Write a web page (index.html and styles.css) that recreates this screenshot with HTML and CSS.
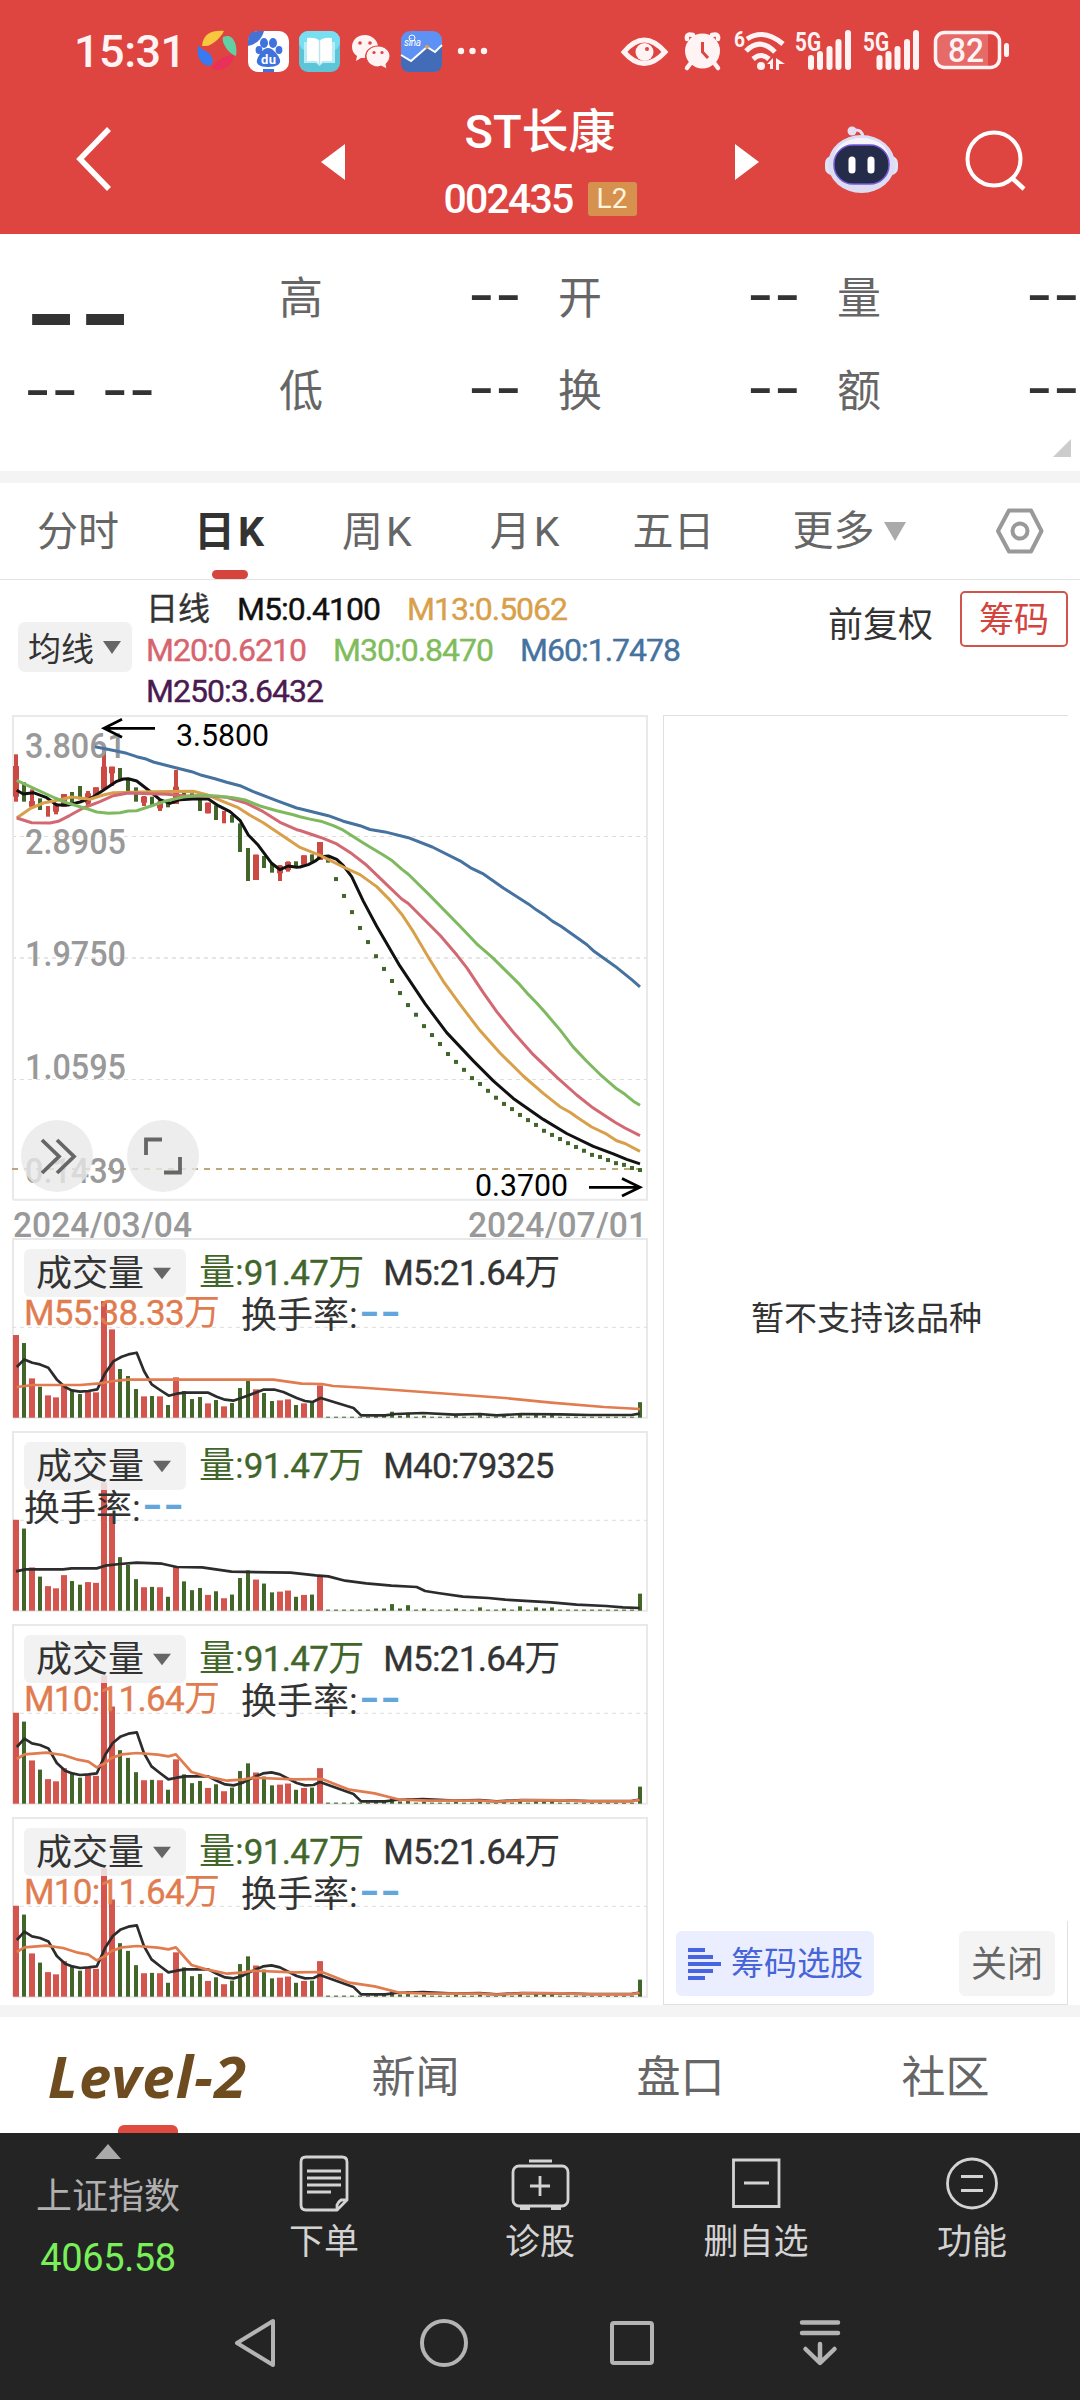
FILE: index.html
```html
<!DOCTYPE html>
<html lang="zh-CN">
<head>
<meta charset="utf-8">
<title>ST长康 002435</title>
<link rel="stylesheet" href="styles.css">
</head>
<body>
<header class="top">
  <div class="status">
    <span class="clock">15:31</span>
    <svg class="apps" width="300" height="44" viewBox="0 0 300 44">
      <g>
        <path d="M4 17C5 4 15 1 26 2C22 10 13 17 8 17Z" fill="#f8c63f"/>
        <path d="M25 8C35 3 40 16 38 27C31 25 23 14 25 8Z" fill="#62cfa5"/>
        <path d="M0 16C-2 28 3 36 11 37C17 35 15 28 11 24C7 21 2 20 0 16Z" fill="#3a7af0"/>
        <path d="M13 39C20 43 32 41 36 27C29 25 19 31 13 39Z" fill="#e8305a"/>
      </g>
      <g transform="translate(50 2)">
        <rect width="41" height="41" rx="10" fill="#fff"/>
        <path d="M0 15V10Q0 0 10 0H16Q13 12 0 15Z" fill="#4671d5"/>
        <g fill="#3f72dc"><ellipse cx="16" cy="12" rx="4" ry="5"/><ellipse cx="25" cy="12" rx="4" ry="5"/><ellipse cx="11" cy="19" rx="3.4" ry="4"/><ellipse cx="31" cy="19" rx="3.4" ry="4"/>
        <path d="M20 17C25 17 31 25 32 29S29 36 20 36S8 33 9 29S15 17 20 17Z"/><path d="M15 38H26V41H15Z"/></g>
        <text x="13" y="33" font-size="13" font-weight="700" fill="#fff" textLength="15">du</text>
      </g>
      <g transform="translate(101 2)">
        <rect width="41" height="41" rx="9" fill="#5ec5d8"/><rect width="41" height="20" rx="9" fill="#78dff2"/>
        <path d="M5 11H36V32H24L20.500 35L17 32H5Z" fill="#b8ecf6"/>
        <path d="M8 7Q17 6 20.500 10Q24 6 33 7V30H23L20.500 34L18 30H8Z" fill="#fff"/><path d="M20.500 10V34" stroke="#bfe3ec" stroke-width="1.500"/>
      </g>
      <g transform="translate(153 5)" fill="#fff3f4">
        <path d="M14 1C6 1 1 6.500 1 13C1 17 3 20 6 22L5 27L10 24H14C14 15 20 12 27 12C26 5 20 1 14 1Z"/>
        <path d="M27 12C20 12 15 17 15 22S20 33 27 33L30 32L36 35L35 30C37 28 39 25 39 22C39 17 34 12 27 12Z" stroke="#de4440" stroke-width="1"/>
        <g fill="#de4440"><circle cx="9" cy="9" r="1.800"/><circle cx="19" cy="9" r="1.800"/><circle cx="23" cy="18.500" r="1.600"/><circle cx="31" cy="18.500" r="1.600"/></g>
      </g>
      <g transform="translate(203 2)">
        <rect width="41" height="41" rx="9" fill="#5d91f4"/>
        <path d="M0 24L10 30L26 16L34 21L41 14V32Q41 41 32 41H9Q0 41 0 32Z" fill="#426bb8"/>
        <path d="M0 24L10 30L26 16L34 21L41 14" fill="none" stroke="#fff" stroke-width="2"/>
        <circle cx="26" cy="16" r="2" fill="#e8a04a"/><circle cx="11" cy="7" r="3" fill="none" stroke="#fff"/>
        <text x="3" y="15" font-size="10" font-style="italic" fill="#fff" textLength="17">sina</text>
      </g>
      <g fill="#fff3f4"><circle cx="263" cy="22" r="3.200"/><circle cx="274.500" cy="22" r="3.200"/><circle cx="286" cy="22" r="3.200"/></g>
    </svg>
    <svg class="sys" width="392" height="60" viewBox="0 -8 392 60" fill="#fff3f4">
      <path d="M4 23Q24 -1 45 23Q24 46 4 23Z" fill="none" stroke="#fff3f4" stroke-width="5"/><circle cx="24.500" cy="23" r="9"/><circle cx="27" cy="20" r="2" fill="#de4440"/>
      <circle cx="82.500" cy="22" r="17.500"/><path d="M67 10Q66 4 73 6M98 10Q99 4 92 6M70 35L67 39M95 35L98 39" stroke="#fff3f4" stroke-width="4.500" fill="none" stroke-linecap="round"/><path d="M82.500 13V23L88 29" stroke="#de4440" stroke-width="3" fill="none"/>
      <text x="114" y="18" font-size="22" font-weight="700" textLength="11" lengthAdjust="spacingAndGlyphs">6</text>
      <g fill="none" stroke="#fff3f4" stroke-width="5"><path d="M127 10Q144 -1 163 15M126 22Q140 8 155 23M133 30Q141 23 149 30"/></g>
      <circle cx="141" cy="37" r="4"/><path d="M147 35L153 29V40H150V35ZM156 29V41H159V35H165Z"/>
      <text x="175" y="22" font-size="26" font-weight="700" textLength="26" lengthAdjust="spacingAndGlyphs">5G</text>
      <path d="M191 29V38M200 25V38M209.500 20V38M218.500 13V38M228 4V38" stroke="#fff3f4" stroke-width="6" stroke-linecap="round"/>
      <text x="243" y="22" font-size="26" font-weight="700" textLength="26" lengthAdjust="spacingAndGlyphs">5G</text>
      <path d="M259.500 29V38M268.500 25V38M277.500 20V38M287 13V38M296 4V38" stroke="#fff3f4" stroke-width="6" stroke-linecap="round"/>
      <g transform="translate(-2 0)"><path d="M324 5H370V39H324Q318 39 318 32V12Q318 5 324 5Z" opacity=".22"/>
      <rect x="317.500" y="3.500" width="64" height="35" rx="9" fill="none" stroke="#fff3f4" stroke-width="3.500"/><rect x="386" y="14" width="5" height="14" rx="2.500"/>
      <text x="330" y="33" font-size="34" font-weight="500" textLength="36" lengthAdjust="spacingAndGlyphs">82</text></g>
    </svg>
  </div>
  <div class="titlebar">
    <svg class="back" width="36" height="66" viewBox="0 0 36 66"><path d="M33 3L4 33L33 63" fill="none" stroke="#fff" stroke-width="5.500"/></svg>
    <svg class="prev" width="24" height="36" viewBox="0 0 24 36"><path d="M24 0V36L0 18Z" fill="#fff"/></svg>
    <div class="names">
      <div class="name">ST长康</div>
      <div class="code"><span>002435</span><b>L2</b></div>
    </div>
    <svg class="next" width="24" height="36" viewBox="0 0 24 36"><path d="M0 0V36L24 18Z" fill="#fff"/></svg>
    <svg class="robot" width="74" height="70" viewBox="0 0 74 70">
      <circle cx="27" cy="6" r="4.500" fill="#e6e0f4"/><path d="M29 5Q37 4 38 12" fill="none" stroke="#e6e0f4" stroke-width="3"/>
      <rect x="0" y="31" width="73" height="19" rx="7" fill="#dfe2f8"/>
      <ellipse cx="36.500" cy="39" rx="33.500" ry="29" fill="#dcdcf3"/><ellipse cx="36.500" cy="32" rx="27" ry="19" fill="#f6f4fb"/>
      <rect x="9" y="20" width="55" height="39" rx="19" fill="#252c4a" stroke="#7358d8" stroke-width="1.500"/>
      <path d="M27 35V45M46 35V45" stroke="#fff" stroke-width="7" stroke-linecap="round"/>
    </svg>
    <svg class="search" width="64" height="64" viewBox="0 0 64 64"><circle cx="30" cy="30" r="26.500" fill="none" stroke="#fff" stroke-width="4"/><path d="M48 49L60 60" stroke="#fff" stroke-width="4.500"/></svg>
  </div>
</header>

<section class="quote">
  <div class="price"><span class="big">--</span><span class="chg"><i>--</i><i>--</i></span></div>
  <div class="cell"><span>高</span><i>--</i></div><div class="cell"><span>开</span><i>--</i></div><div class="cell"><span>量</span><i>--</i></div>
  <div class="cell"><span>低</span><i>--</i></div><div class="cell"><span>换</span><i>--</i></div><div class="cell"><span>额</span><i>--</i></div>
  <svg class="corner" width="18" height="18" viewBox="0 0 18 18"><path d="M18 0V18H0Z" fill="#ccc"/></svg>
</section>

<nav class="periods">
  <span>分时</span><span class="on k">日K</span><span class="k">周K</span><span class="k">月K</span><span>五日</span>
  <span class="more">更多<svg width="24" height="19" viewBox="0 0 24 19"><path d="M1 0H23L12 19Z" fill="#aaa"/></svg></span>
  <svg class="gear" width="50" height="46" viewBox="0 0 50 46"><path d="M14 2.500H36L46.500 23L36 43.500H14L3 23Z" fill="none" stroke="#999" stroke-width="4" stroke-linejoin="round"/><circle cx="25" cy="23" r="7.500" fill="none" stroke="#999" stroke-width="4"/></svg>
</nav>

<section class="legend">
  <div class="pick">均线<svg width="20" height="13" viewBox="0 0 20 13"><path d="M1 0H19L10 13Z" fill="#666"/></svg></div>
  <div class="mas">
    <div><span class="cjk">日线</span><span class="c5">M5:0.4100</span><span class="c13">M13:0.5062</span></div>
    <div><span class="c20">M20:0.6210</span><span class="c30">M30:0.8470</span><span class="c60">M60:1.7478</span></div>
    <div><span class="c250">M250:3.6432</span></div>
  </div>
  <div class="adj">前复权</div>
  <div class="chips">筹码</div>
</section>

<main class="body">
  <div class="charts">
    <svg id="kline" class="kline" width="648" height="523" viewBox="0 715 648 523"></svg>
    <div class="vol"><svg data-line="m55" data-scale="1"></svg>
      <div class="vh"><span class="vpick">成交量<svg width="18" height="13" viewBox="0 0 20 13"><path d="M0 0H20L10 13Z" fill="#666"/></svg></span><span class="g">量:<em>91.47</em>万</span><span><em>M5:21.64</em>万</span></div>
      <div class="vh2"><span class="o"><em>M55:38.33</em>万</span><span>换手率:<u>--</u></span></div>
    </div>
    <div class="vol"><svg data-line="m40" data-scale="1.1"></svg>
      <div class="vh"><span class="vpick">成交量<svg width="18" height="13" viewBox="0 0 20 13"><path d="M0 0H20L10 13Z" fill="#666"/></svg></span><span class="g">量:<em>91.47</em>万</span><span><em>M40:79325</em></span></div>
      <div class="vh2"><span>换手率:<u>--</u></span></div>
    </div>
    <div class="vol"><svg data-line="m10" data-scale="1.1"></svg>
      <div class="vh"><span class="vpick">成交量<svg width="18" height="13" viewBox="0 0 20 13"><path d="M0 0H20L10 13Z" fill="#666"/></svg></span><span class="g">量:<em>91.47</em>万</span><span><em>M5:21.64</em>万</span></div>
      <div class="vh2"><span class="o"><em>M10:11.64</em>万</span><span>换手率:<u>--</u></span></div>
    </div>
    <div class="vol"><svg data-line="m10" data-scale="1.1"></svg>
      <div class="vh"><span class="vpick">成交量<svg width="18" height="13" viewBox="0 0 20 13"><path d="M0 0H20L10 13Z" fill="#666"/></svg></span><span class="g">量:<em>91.47</em>万</span><span><em>M5:21.64</em>万</span></div>
      <div class="vh2"><span class="o"><em>M10:11.64</em>万</span><span>换手率:<u>--</u></span></div>
    </div>
  </div>
  <aside class="side">
    <div class="none">暂不支持该品种</div>
    <div class="sidebtns">
      <span class="pickstock"><svg width="34" height="32" viewBox="0 0 34 32"><path d="M0 2H17M0 9H25M0 16H33M0 23H25M0 30H17" stroke="#4765e0" stroke-width="4"/></svg>筹码选股</span>
      <span class="close">关闭</span>
    </div>
  </aside>
</main>

<nav class="info"><span class="lv">Level-2</span><span>新闻</span><span>盘口</span><span>社区</span></nav>

<footer class="dock">
  <div class="actions">
    <div class="index"><svg width="26" height="15" viewBox="0 0 26 15"><path d="M0 15H26L13 0Z" fill="#aaa"/></svg><span>上证指数</span><strong>4065.58</strong></div>
    <div class="act"><svg viewBox="0 0 60 60"><g fill="none" stroke="#d3d3d3" stroke-width="2.800"><path d="M12 4H48Q53 4 53 9V47L43 57H12Q7 57 7 52V9Q7 4 12 4ZM43 57V52Q44 49 47 47H53"/><path d="M13 18H47M13 25H47M13 32H47M13 39H37"/></g></svg><span>下单</span></div>
    <div class="act"><svg viewBox="0 0 60 60"><g fill="none" stroke="#d3d3d3" stroke-width="2.800"><rect x="3" y="13" width="55" height="40" rx="6"/><path d="M19 8H42M30 23V43M20 33H40"/><path d="M10 55H20M41 55H51" stroke-width="4"/></g></svg><span>诊股</span></div>
    <div class="act"><svg viewBox="0 0 60 60"><path d="M7.500 7H53V53.500H7.500ZM18 30H43" fill="none" stroke="#d3d3d3" stroke-width="2.800"/></svg><span>删自选</span></div>
    <div class="act"><svg viewBox="0 0 60 60"><circle cx="30" cy="30.500" r="24.500" fill="none" stroke="#d3d3d3" stroke-width="2.800"/><path d="M19 23.500H41M19 37.500H41" stroke="#d3d3d3" stroke-width="2.800"/></svg><span>功能</span></div>
  </div>
  <div class="sysnav">
    <svg viewBox="0 0 50 50"><path d="M42 3V47L6 25Z" fill="none" stroke="#b4b4b4" stroke-width="4" stroke-linejoin="round"/></svg>
    <svg viewBox="0 0 50 50"><circle cx="25" cy="25" r="22" fill="none" stroke="#b4b4b4" stroke-width="4"/></svg>
    <svg viewBox="0 0 50 50"><rect x="5" y="5" width="40" height="40" rx="2" fill="none" stroke="#b4b4b4" stroke-width="4"/></svg>
    <svg viewBox="0 0 50 50"><path d="M7 4.500H43M7 15H43M25 26V44M10.500 31L25 45L39.500 31" fill="none" stroke="#b4b4b4" stroke-width="4.500" stroke-linecap="round" stroke-linejoin="round"/></svg>
  </div>
</footer>
<script src="charts.js"></script>
</body>
</html>
```
FILE: styles.css
```css
* { box-sizing: border-box; }
body { margin: 0; width: 1080px; height: 2400px; background: #fff; color: #333; font-family: Roboto, "Noto Sans CJK SC", sans-serif; overflow: hidden; }
i, em, u { font-style: normal; text-decoration: none; }
svg { display: block; flex: none; overflow: visible; }

.top { height: 234px; background: #de4440; color: #fff; }
.status { height: 102px; display: flex; align-items: center; padding-left: 74px; }
.clock { width: 124px; font-size: 45px; font-weight: 500; color: #fff3f4; letter-spacing: -.5px; }
.sys { margin-left: 122px; }
.titlebar { height: 132px; display: flex; align-items: flex-start; }
.back { margin: 24px 0 0 76px; }
.prev { margin: 42px 0 0 209px; }
.names { width: 390px; text-align: center; }
.name { font-size: 47px; line-height: 60px; font-weight: 500; }
.code { display: flex; justify-content: center; align-items: center; gap: 15px; height: 74px; font-size: 41px; font-weight: 500; letter-spacing: -1.8px; }
.code b { width: 49px; height: 34px; border-radius: 3px; background: #d6914f; color: #fff4dc; font-weight: 400; font-size: 28px; line-height: 33px; letter-spacing: 0; }
.next { margin-top: 42px; }
.robot { margin: 23px 0 0 66px; }
.search { margin: 27px 0 0 65px; }

.quote { position: relative; height: 249px; border-bottom: 12px solid #f4f4f4; padding-top: 14px; display: grid; grid-template-columns: 279px 279px 279px 279px; grid-template-rows: 93px 93px; overflow: hidden; }
.price { grid-row: 1 / 3; display: flex; flex-direction: column; }
.quote i, .big { font-family: Inter, sans-serif; color: #333; }
.cell { display: flex; align-items: center; justify-content: space-between; font-size: 44px; color: #666; padding: 0 36px 0 0; }
.cell i, .chg i { font-size: 59px; line-height: 93px; }
.big { height: 93px; line-height: 93px; font-size: 117px; font-weight: 500; padding: 18px 0 0 24px; }
.chg { display: flex; height: 93px; gap: 23px; padding: 2px 0 0 24px; }
.corner { position: absolute; right: 9px; bottom: 14px; }

.periods { height: 97px; display: flex; align-items: center; border-bottom: 1px solid #e3e3e3; font-size: 41px; color: #666; padding-left: 37px; }
.periods > span { height: 96px; line-height: 98px; white-space: nowrap; }
.periods .k { letter-spacing: 3px; }
.periods .on { position: relative; font-weight: 700; color: #333; margin: 0 75px 0 75px; }
.on::after { content: ""; position: absolute; left: 18px; bottom: 0; width: 36px; height: 9px; border-radius: 5px; background: #d5443d; }
.periods span:nth-child(4) { margin: 0 70px 0 75px; }
.periods .more { display: flex; align-items: center; gap: 8px; margin-left: 78px; }
.gear { margin-left: 88px; }

.legend { height: 135px; display: flex; padding-left: 18px; }
.pick { margin-top: 42px; width: 114px; height: 50px; border-radius: 7px; background: #f1f1f1; display: flex; align-items: center; justify-content: center; gap: 8px; font-size: 33px; }
.mas { width: 696px; padding: 9px 0 0 14px; font-size: 32px; line-height: 41px; letter-spacing: -1px; -webkit-text-stroke: .4px; }
.mas div { display: flex; gap: 27px; height: 41px; }
.mas .cjk { letter-spacing: 0; font-size: 32px; }
.c5 { color: #111; } .c13 { color: #d8a04a; } .c20 { color: #d7656f; } .c30 { color: #7fbc5c; } .c60 { color: #45729f; } .c250 { color: #4a1a50; }
.adj { margin-top: 23px; font-size: 35px; line-height: 46px; width: 132px; }
.chips { margin-top: 11px; width: 108px; height: 56px; border: 2px solid #d2524c; border-radius: 5px; color: #d2443d; font-size: 35px; line-height: 56px; text-align: center; }

.body { height: 1290px; display: flex; }
.charts { width: 648px; }
.kline text { font-family: Roboto, sans-serif; }
.vol { position: relative; height: 193px; padding-left: 24px; }
.vol > svg { position: absolute; left: 0; top: 0; }
.vh, .vh2 { position: relative; display: flex; align-items: center; font-size: 36px; white-space: nowrap; }
.vh { padding-top: 11px; height: 59px; gap: 21px; line-height: 46px; }
.vh > span { padding-top: 1px; }
.vh > span + span { margin-left: -8px; }
.vh > span + span + span { margin-left: -2px; }
.vh2 { height: 27px; gap: 21px; line-height: 27px; margin-top: 3px; }
.vol em { letter-spacing: -.7px; font-size: 35px; -webkit-text-stroke: .35px; }
.vol u { display: inline-block; height: 27px; font-family: Inter, sans-serif; font-size: 46px; font-weight: 500; color: #62a6dc; margin-left: 1px; vertical-align: baseline; }
.vpick { width: 162px; height: 48px; border-radius: 6px; background: rgba(240, 240, 240, .85); display: flex; align-items: center; gap: 9px; padding-left: 12px; }
.g { color: #42662a; } .o { color: #e07c4f; }

.side { width: 405px; margin-left: 15px; border: 1px solid #e0e0e0; border-right: 0; height: 1290px; display: flex; flex-direction: column; justify-content: space-between; }
.none { font-size: 33px; text-align: center; padding: 578px 0 0 1px; line-height: 50px; }
.sidebtns { height: 83px; border-right: 1px solid #e0e0e0; display: flex; justify-content: space-between; padding: 10px 12px 0; }
.sidebtns span { height: 65px; border-radius: 6px; line-height: 68px; }
.pickstock { width: 198px; background: #ebeefe; color: #4765d8; font-size: 33px; display: flex; align-items: center; gap: 9px; padding-left: 12px; }
.close { width: 96px; background: #f4f4f4; color: #666; font-size: 36px; text-align: center; }

.info { height: 128px; border-top: 12px solid #f4f4f4; padding-left: 15px; display: grid; grid-template-columns: repeat(4, 265px); text-align: center; font-size: 44px; line-height: 122px; color: #666; overflow: hidden; }
.info span { height: 116px; padding-left: 6px; }
.info .lv { position: relative; padding: 0; font: italic 700 58px/118px "Noto Sans", sans-serif; letter-spacing: 1.2px; color: #6e4c20; }
.lv::after { content: ""; position: absolute; left: 103px; bottom: 0; width: 60px; height: 8px; border-radius: 6px 6px 0 0; background: #e04b3f; }

.dock { height: 267px; background: #242424; color: #d3d3d3; }
.actions { height: 150px; display: grid; grid-template-columns: repeat(5, 216px); }
.actions > div { display: flex; flex-direction: column; align-items: center; }
.index { padding-top: 11px; color: #b0b0b0; font-size: 36px; }
.index span { line-height: 50px; margin-top: 13px; }
.index strong { color: #79f05a; font-weight: 400; font-size: 38px; line-height: 50px; margin-top: 11px; letter-spacing: -.4px; }
.act { padding-top: 20px; font-size: 35px; }
.act svg { width: 60px; height: 60px; }
.act span { line-height: 50px; margin-top: 5px; }
.sysnav { display: grid; grid-template-columns: repeat(4, 188px); justify-items: center; padding: 35px 0 0 162px; }
.sysnav svg { width: 50px; height: 50px; }
```
FILE: charts.js
```js
const RED = '#cc4a44', GREEN = '#42662a';
const path = (pts, color, w = 3) =>
  `<polyline points="${pts.map(p => p[0].toFixed(1) + ',' + p[1].toFixed(1)).join(' ')}" fill="none" stroke="${color}" stroke-width="${w}" stroke-linejoin="round"/>`;
const pairs = s => s.trim().split(/\s+/).map(p => p.split(',').map(Number));
const left = s => pairs(s).map(([x, y]) => [x / 3, 700 + y / 3]);
const right = s => pairs(s).map(([x, y]) => [300 + x / 3, 700 + y / 2.904]);

// kind, high, low, body top, body bottom
const candles = `r,163,305,198,290 g,247,305 r,268,325,303,320 g,295,330 r,318,350 r,310,343,312,335 r,282,320,282,320 g,276,308 g,258,298 r,273,318,280,310 r,262,290,262,290 r,145,268,200,268 r,200,258,200,220 g,204,240 g,237,273 g,262,305 r,288,318,290,308 g,290,315 r,300,333,305,325 g,300,322 r,210,312,260,312 g,272,300 g,280,298 g,298,333 r,308,340,308,340 g,316,360 r,333,370 g,345,368 g,370,456 g,444,543 r,464,540,464,540 g,468,504 g,490,518 r,495,543,497,520 r,484,515,486,510 g,484,500 r,466,494,466,494 g,463,485 r,426,480,426,480 g,470,488`.split(' ').map(c => c.split(','));
const limits = [520,569,616,662,703,744,781,816,851,886,914,947,973,999,1028,1051,1074,1098,1115,1135,1155,1173,1188,1205,1220,1234,1251,1263,1275,1287,1298,1309,1321,1327,1336,1345,1350,1359,1365];

let k = '';
[836.5, 958, 1079.5].forEach((y, i) => k += `<path d="M12 ${y}H647" stroke="#ddd" stroke-width="${i === 1 ? 1.6 : 1}" stroke-dasharray="4 4"/>`);
k += '<path d="M13 1199.700V716H647V1199.700H13" fill="none" stroke="#e9e9e9" stroke-width="2"/>';
k += '<path d="M12 1169H640" stroke="#bda57c" stroke-width="2" stroke-dasharray="6 6"/>';
const t = (x, y, w, s, size, fill, weight = 400) => `<text x="${x}" y="${y}" font-size="${size}" font-weight="${weight}" fill="${fill}" textLength="${w}" lengthAdjust="spacingAndGlyphs">${s}</text>`;
candles.forEach(([c, h, l, bt, bb], i) => {
  const x = 16 + 8 * i, col = c === 'r' ? RED : GREEN;
  k += `<rect x="${x - 2}" y="${700 + h / 3}" width="4" height="${(l - h) / 3}" fill="${col}"/>`;
  if (bt) k += `<rect x="${x - 3}" y="${700 + bt / 3}" width="6" height="${(bb - bt) / 3}" fill="${col}"/>`;
});
limits.forEach((y, i) => k += `<rect x="${334 + 8 * i}" y="${698 + y / 2.904}" width="4" height="4" fill="${GREEN}"/>`);
[['3.8061', 758], ['2.8905', 854], ['1.9750', 966], ['1.0595', 1079], ['0.1439', 1183]].forEach(([s, y]) => k += t(25, y, 101, s, 35, '#999', 500));
k += path([...left('285,140 345,152 380,160 410,170 435,176 460,186 527,203 575,215 605,226 645,236 680,247 720,257 760,275 830,302 890,324'), ...right('0,316 85,336 130,352 180,365 210,376 255,383 325,400 397,427 480,467 515,489 548,504 610,546 685,592 710,610 733,624 758,643 783,657 860,710 880,728 945,773 995,812 1020,833')], '#45729f');
k += path([...left('50,271 70,282 100,278 140,293 170,315 205,315 240,306 275,293 310,271 350,244 370,237 385,236 410,243 445,270 480,299 510,310 540,299 590,296 625,297 655,317 690,335 720,361 745,405 775,436 815,490 840,509 865,498 890,502'), ...right('0,485 25,478 45,468 62,455 85,453 110,463 130,481 155,513 190,584 230,657 300,773 375,882 440,966 520,1048 580,1106 640,1157 730,1218 800,1259 880,1296 940,1318 980,1334 1020,1347')], '#111');
k += path([...left('50,354 90,326 130,309 180,299 215,291 270,298 310,285 340,278 450,275 580,274 620,284 670,305 715,323 750,346 790,368 840,402 890,436'), ...right('0,428 60,451 130,485 180,507 230,542 270,581 305,622 340,673 390,755 430,817 480,884 540,960 600,1025 670,1092 730,1142 780,1181 810,1197 830,1211 875,1240 920,1261 950,1280 975,1288 1020,1311')], '#d8a04a');
k += path([...left('50,354 95,368 150,369 175,364 210,346 250,324 300,305 340,287 385,279 450,281 500,283 560,288 620,288 680,292 740,310 790,335 840,367 890,389'), ...right('0,379 40,392 70,402 110,418 155,446 200,480 260,536 305,578 325,591 420,683 470,740 500,777 550,850 590,905 640,965 700,1030 770,1095 830,1147 880,1185 945,1226 975,1243 1020,1265')], '#d26872');
k += path([...left('50,241 95,262 165,294 205,310 260,326 290,336 325,340 360,338 385,333 410,332 460,316 500,302 550,291 600,286 650,288 700,293 735,300 780,318 830,332 880,344'), ...right('0,339 30,346 62,352 100,365 130,378 190,415 250,450 277,467 305,491 325,506 385,563 480,657 530,708 575,746 655,822 685,855 710,880 735,907 780,958 820,1008 860,1049 900,1087 950,1129 975,1145 1000,1165 1020,1177')], '#7fb95f');
k += t(176, 745.500, 93, '3.5800', 31.500, '#000') + t(475, 1196, 93, '0.3700', 31.500, '#000');
k += t(13, 1237, 179, '2024/03/04', 35, '#999', 500) + t(468, 1237, 179, '2024/07/01', 35, '#999', 500);
k += '<path d="M155 728.300H104M122 719.300L104 728.300L122 737.300M589 1187.300H640M622 1178.500L640 1187.300L622 1196" fill="none" stroke="#000" stroke-width="2.700"/>';
k += '<g fill="#e8e8e8" fill-opacity=".8"><circle cx="57" cy="1156" r="36"/><circle cx="163" cy="1156" r="36"/></g>';
k += '<path d="M42 1140L59 1156.500L42 1173M57 1140L74 1156.500L57 1173M146 1155V1139.500H162M180 1157V1172.500H164" fill="none" stroke="#666" stroke-width="3.800"/>';
document.getElementById('kline').innerHTML = k;

// bar heights in thirds of a pixel
const vols = 'r248 g224 r118 g93 r67 r61 r97 g81 g71 r78 r76 r350 r265 g146 g125 g86 r64 g65 r64 g38 r121 g80 g56 g62 r43 g53 r34 g44 g89 g110 r85 g74 g50 r52 r55 g38 r43 g44 r97'.split(' ');
const small = { 45: 2, 46: 2, 47: 6, 48: 2, 49: 5, 51: 2, 55: 2, 58: 3, 61: 2, 63: 4, 65: 3, 66: 2, 67: 3, 78: 15.5 };
const BASE = 179.7;
const low = (s, base) => pairs(s).map(([x, y]) => [x / 2.376, BASE - (base - y) / 3]);
const near = s => pairs(s).map(([x, y]) => [x / 3, BASE - (1253 - y) / 3]);
const m5 = [...near('50,1101 73,1078 97,1088 120,1093 145,1103 170,1138 195,1161 215,1171 240,1175 265,1173 292,1168 315,1120 340,1084 365,1070 385,1063 410,1058 432,1113 455,1153 480,1170 506,1187 530,1181 555,1178 625,1178 650,1190 675,1199 700,1202 740,1188 790,1169 825,1169 850,1176 890,1194 915,1203 938,1206 962,1194'), ...low('840,553 858,575 915,575 940,571 1005,568 1080,573 1140,571 1180,575 1240,571 1330,572 1400,574 1500,574 1520,570', 582)];
const m5tall = low('40,412 58,387 76,401 95,406 115,416 135,460 155,483 172,491 190,496 210,494 230,491 250,435 268,400 287,380 305,372 325,368 342,430 360,470 380,490 400,509 420,504 440,500 495,500 515,513 535,524 555,527 575,520 590,510 625,491 645,488 665,494 705,520 725,527 745,526 760,517 840,553 858,575 915,575 940,571 1005,568 1080,573 1140,571 1180,575 1240,571 1330,572 1400,574 1500,574 1520,570', 582);
const m10 = low('40,448 58,434 110,429 150,436 185,450 210,456 230,473 250,460 265,445 290,434 325,430 375,435 400,440 418,434 455,487 490,500 540,513 580,509 600,504 700,509 765,508 830,540 890,551 950,570 1020,573 1080,573 1140,573 1180,576 1240,572 1340,572 1400,575 1500,575 1520,570', 582);
const m40 = low('38,455 60,449 150,449 170,446 230,446 250,438 285,433 325,429 385,432 420,442 480,443 550,456 690,459 750,467 780,470 820,483 870,491 930,498 990,502 1010,514 1040,520 1100,531 1160,535 1200,540 1310,548 1370,555 1440,559 1480,563 1520,565', 573);
const m55 = [...near('50,1161 100,1155 240,1155 300,1150 340,1143 385,1139 820,1139 905,1151 965,1152 1000,1158'), [360, 149.500], [444, 155.500], [505, 160], [551, 164.600], [604, 169], [640, 171]];
const BLACK = '#2c2c2c', ORANGE = '#e07c4f';
const lines = { m55: path(m5, BLACK, 2.7) + path(m55, ORANGE, 2.7), m40: path(m40, BLACK, 2.7), m10: path(m5tall, BLACK, 2.7) + path(m10, ORANGE, 2.7) };

document.querySelectorAll('svg[data-line]').forEach(el => {
  el.setAttribute('width', 648); el.setAttribute('height', 182);
  const scale = Number(el.dataset.scale);
  let s = '<path d="M13 180V1H647V179.700H13" fill="none" stroke="#e9e9e9" stroke-width="2"/><path d="M12 89.300H647" stroke="#ddd" stroke-dasharray="4 4"/>';
  for (let i = 0; i < 79; i++) {
    const v = vols[i], red = v && v[0] === 'r';
    const h = (v ? v.slice(1) / 3 : (small[i] || 1)) * scale, w = red ? 6 : 4;
    s += `<rect x="${16 + 8 * i - w / 2}" y="${BASE - h}" width="${w}" height="${h}" fill="${red ? '#d4544e' : GREEN}"/>`;
  }
  el.innerHTML = s + lines[el.dataset.line];
});
```
